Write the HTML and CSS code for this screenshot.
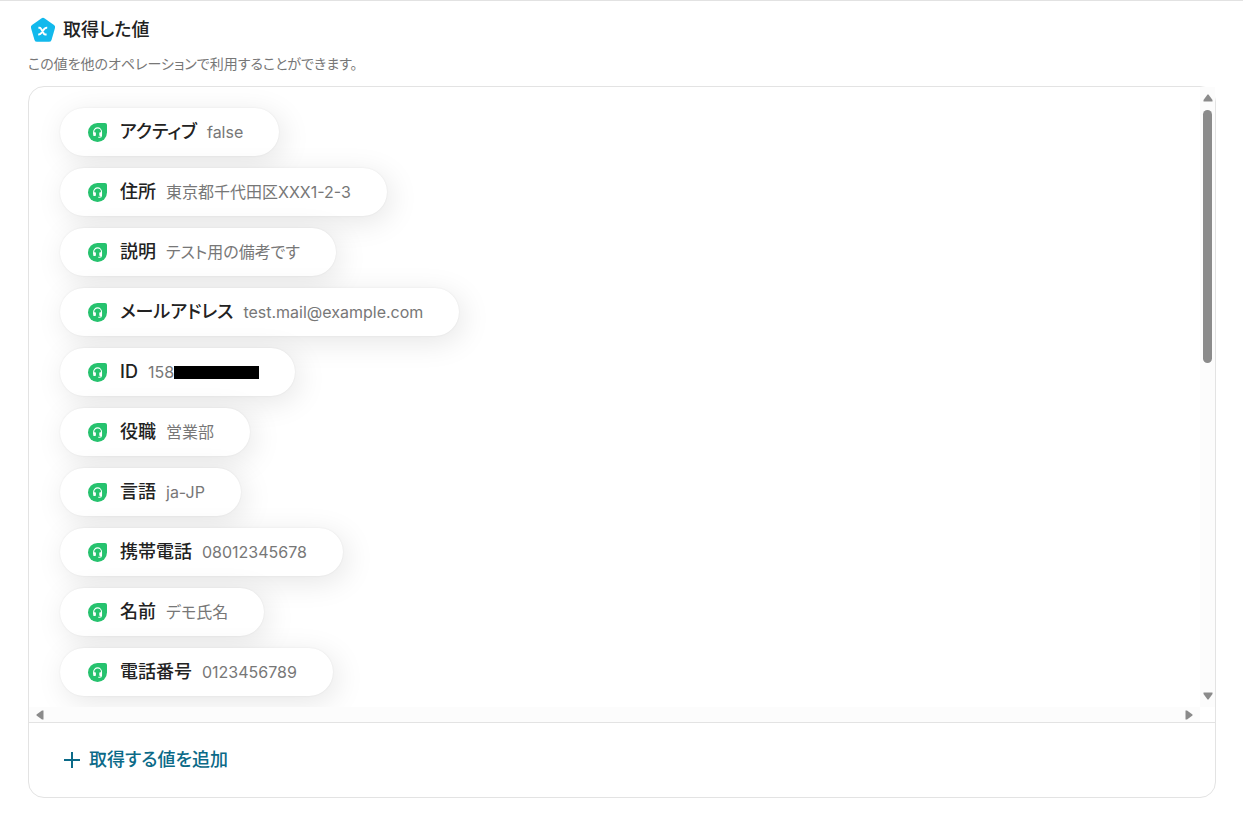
FILE: index.html
```html
<!DOCTYPE html>
<html lang="ja">
<head>
    <meta charset="UTF-8">
    <meta name="viewport" content="width=device-width, initial-scale=1.0">
    <title>取得した値</title>
    <link rel="stylesheet" href="styles.css">
</head>
<body>
    <svg class="symbols" aria-hidden="true">
        <symbol id="service" viewBox="0 0 20 20">
            <path d="M9.500 1h7.500a2 2 0 0 1 2 2v7.500A9.500 9.500 0 1 1 9.500 1z" fill="#26c26e"/>
            <path d="M5.700 12V9.800a3.900 3.900 0 0 1 7.800 0V13.500q0 1.700-1.700 1.700h-1.500" fill="none" stroke="#fff" stroke-width="1.100"/>
            <rect x="5.200" y="10.200" width="2.700" height="3.900" rx="0.800" fill="#fff"/>
            <rect x="11.300" y="10.200" width="2.700" height="3.900" rx="0.800" fill="#fff"/>
        </symbol>
    </svg>
    <div class="container">
        <div class="heading">
            <svg class="logo" viewBox="0 0 26 26" aria-hidden="true">
                <path d="M11.300 1.400q1.700-1.100 3.400 0l9.300 6.700q1.500 1.200 1 3l-3.500 11.800q-.6 1.900-2.500 1.900H7q-1.900 0-2.500-1.900L1 11.100q-.5-1.800 1-3z" fill="#12b9ec"/>
                <path d="M8.400 10.700h.9q1.100 0 1.600.9l2.900 5q.6.900 1.600.9h1.200M17.200 10.700q-1.800-.2-2.900 1.200l-3.100 4.300q-1.100 1.400-3 1.200" fill="none" stroke="#fff" stroke-width="1.900"/>
            </svg>
            <h1>取得した値</h1>
        </div>
        <p class="description">この値を他のオペレーションで利用することができます。</p>
        <div class="panel">
            <div class="scroll-area">
                <ul class="values">
                    <li class="value"><svg class="icon"><use href="#service"/></svg><span class="name">アクティブ</span><span class="data">false</span></li>
                    <li class="value"><svg class="icon"><use href="#service"/></svg><span class="name">住所</span><span class="data">東京都千代田区XXX1-2-3</span></li>
                    <li class="value"><svg class="icon"><use href="#service"/></svg><span class="name">説明</span><span class="data">テスト用の備考です</span></li>
                    <li class="value"><svg class="icon"><use href="#service"/></svg><span class="name">メールアドレス</span><span class="data">test.mail@example.com</span></li>
                    <li class="value"><svg class="icon"><use href="#service"/></svg><span class="name">ID</span><span class="data">158<span class="masked"></span></span></li>
                    <li class="value"><svg class="icon"><use href="#service"/></svg><span class="name">役職</span><span class="data">営業部</span></li>
                    <li class="value"><svg class="icon"><use href="#service"/></svg><span class="name">言語</span><span class="data">ja-JP</span></li>
                    <li class="value"><svg class="icon"><use href="#service"/></svg><span class="name">携帯電話</span><span class="data">08012345678</span></li>
                    <li class="value"><svg class="icon"><use href="#service"/></svg><span class="name">名前</span><span class="data">デモ氏名</span></li>
                    <li class="value"><svg class="icon"><use href="#service"/></svg><span class="name">電話番号</span><span class="data">0123456789</span></li>
                </ul>
                <div class="bar vertical">
                    <svg class="arrow" viewBox="0 0 10 8"><path d="M4.500 .5h1L9.500 6v1.500h-9V6z"/></svg>
                    <div class="track"><div class="thumb"></div></div>
                    <svg class="arrow" viewBox="0 0 10 8"><path d="M4.500 7.500h1L9.500 2V.5h-9V2z"/></svg>
                </div>
                <div class="bar horizontal">
                    <svg class="arrow" viewBox="0 0 8 10"><path d="M.5 4.500v1L6 9.500h1.500v-9H6z"/></svg>
                    <svg class="arrow" viewBox="0 0 8 10"><path d="M7.500 4.500v1L2 9.500H.5v-9H2z"/></svg>
                </div>
            </div>
            <div class="footer">
                <button class="add-value" type="button">
                    <svg class="plus" viewBox="0 0 16 16" aria-hidden="true"><path d="M8 0v16M0 8h16"/></svg>
                    取得する値を追加
                </button>
            </div>
        </div>
    </div>
</body>
</html>
```
FILE: styles.css
```css
body {
    margin: 0;
    font-family: Inter, "Noto Sans CJK JP", sans-serif;
    font-feature-settings: "palt";
    color: #222;
    background-color: #fff;
    border-top: 1px solid #e2e2e2;
}
.symbols {
    display: none;
}
.container {
    padding: 16px 27px 17px 28px;
}
.heading {
    display: flex;
    align-items: center;
    gap: 7px;
    height: 26px;
    padding-left: 2px;
}
.heading h1 {
    margin: 0;
    font-size: 18px;
    font-weight: 500;
    line-height: 24px;
}
.logo {
    width: 26px;
    height: 26px;
}
.description {
    margin: 11px 0 12px;
    font-size: 14px;
    line-height: 20px;
    color: #777;
}
.panel {
    border: 1px solid #e3e3e3;
    border-radius: 16px;
}
.scroll-area {
    display: grid;
    grid-template-columns: 1fr 15px;
    border-bottom: 1px solid #e3e3e3;
}
.values {
    display: flex;
    flex-direction: column;
    align-items: flex-start;
    gap: 12px;
    margin: 0;
    padding: 21px 31px 11px;
    list-style: none;
    overflow: hidden;
    border-top-left-radius: 15px;
}
.value {
    display: flex;
    align-items: center;
    height: 48px;
    padding: 0 36px 0 28px;
    box-sizing: border-box;
    background-color: #fff;
    border-radius: 24px;
    box-shadow: 0 0 2px rgba(0, 0, 0, 0.08), 4px 6px 30px rgba(0, 0, 0, 0.1);
}
.icon {
    width: 20px;
    height: 20px;
    margin-right: 12px;
}
.name {
    margin-right: 10px;
    font-size: 18px;
    font-weight: 500;
    line-height: 24px;
}
.data {
    display: flex;
    align-items: center;
    font-size: 16px;
    line-height: 24px;
    color: #777;
}
.masked {
    width: 85px;
    height: 13px;
    background-color: #000;
}
/* scrollbars */
.bar {
    display: flex;
    align-items: center;
    justify-content: space-between;
    background-color: #fcfcfc;
}
.vertical {
    flex-direction: column;
    padding: 7px 0;
}
.horizontal {
    height: 15px;
    padding: 0 7px;
}
.arrow {
    width: 10px;
    height: 8px;
    fill: #8b8b8b;
}
.horizontal .arrow {
    width: 8px;
    height: 10px;
}
.track {
    flex: 1;
    padding: 8px 0;
}
.thumb {
    width: 9px;
    height: 44%;
    border-radius: 5px;
    background-color: #8b8b8b;
}
.footer {
    padding: 21px 35px;
}
.add-value {
    display: flex;
    align-items: center;
    gap: 9px;
    padding: 4px 0;
    border: none;
    background: none;
    font: inherit;
    font-feature-settings: inherit;
    font-size: 18px;
    font-weight: 500;
    line-height: 24px;
    color: #0b6a88;
    cursor: pointer;
}
.plus {
    width: 16px;
    height: 16px;
    stroke: #0b6a88;
    stroke-width: 2;
}
```
